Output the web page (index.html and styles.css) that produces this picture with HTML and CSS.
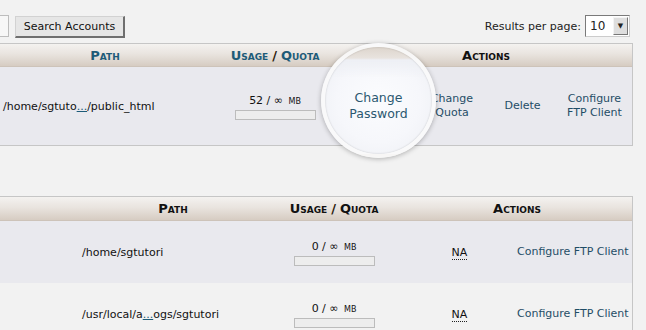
FILE: index.html
```html
<!DOCTYPE html>
<html lang="en">
<head>
  <meta charset="utf-8">
  <title>FTP Accounts</title>
  <link rel="stylesheet" href="styles.css">
</head>
<body>
  <div class="toolbar">
    <div class="search">
      <span class="search-field"></span>
      <button class="btn">Search Accounts</button>
    </div>
    <div class="per-page">
      <span>Results per page:</span>
      <span class="select"><span class="select-value">10</span><span class="select-arrow">&#9660;</span></span>
    </div>
  </div>

  <div class="table table-accounts">
    <div class="row thead">
      <div class="th accent">Path</div>
      <div class="th accent">Usage <span class="slash">/</span> Quota</div>
      <div class="th th-actions">Actions</div>
    </div>
    <div class="row tr">
      <div class="td td-path">/home/sgtuto<a href="#">...</a>/public_html</div>
      <div class="td usage">
        <div class="usage-text">52 / &infin; <span class="unit">mb</span></div>
        <div class="bar"></div>
      </div>
      <div class="td act act-pass">
        <!-- callout over the first action -->
        <a href="#" class="magnifier"><span>Change<br>Password</span></a>
      </div>
      <div class="td act"><a href="#">Change<br>Quota</a></div>
      <div class="td act"><a href="#">Delete</a></div>
      <div class="td act"><a href="#">Configure<br>FTP Client</a></div>
    </div>
  </div>

  <div class="table table-special">
    <div class="row thead">
      <div class="th"></div>
      <div class="th">Path</div>
      <div class="th">Usage <span class="slash">/</span> Quota</div>
      <div class="th th-actions">Actions</div>
    </div>
    <div class="row tr">
      <div class="td"></div>
      <div class="td td-path">/home/sgtutori</div>
      <div class="td usage">
        <div class="usage-text">0 / &infin; <span class="unit">mb</span></div>
        <div class="bar"></div>
      </div>
      <div class="td act"><span class="na">NA</span></div>
      <div class="td act act-left"><a href="#">Configure FTP Client</a></div>
    </div>
    <div class="row tr alt">
      <div class="td"></div>
      <div class="td td-path">/usr/local/a<a href="#">...</a>ogs/sgtutori</div>
      <div class="td usage">
        <div class="usage-text">0 / &infin; <span class="unit">mb</span></div>
        <div class="bar"></div>
      </div>
      <div class="td act"><span class="na">NA</span></div>
      <div class="td act act-left"><a href="#">Configure FTP Client</a></div>
    </div>
  </div>
</body>
</html>
```
FILE: styles.css
```css
:root {
  --bg: #f2f2f2;
  --row: #e9e9ee;
  --border: #c6c6c6;
  --link: #1f4d66;
  --teal: #1d5b78;
  --text: #111;
}
* { box-sizing: border-box; margin: 0; padding: 0; }
body {
  font-family: 'DejaVu Sans', Verdana, sans-serif;
  font-size: 11px;
  background: var(--bg);
  color: var(--text);
  overflow: hidden;
}
a { color: var(--link); text-decoration: none; }

/* top bar */
.toolbar {
  display: flex;
  justify-content: space-between;
  align-items: flex-start;
  padding: 15px 16px 0 0;
  height: 43px;
}
.search {
  display: flex;
  align-items: flex-start;
  gap: 6px;
}
.search-field {
  width: 9px;
  height: 22px;
  background: #f7f7f7;
  border: 1px solid #bdbdbd;
  border-left: none;
}
.btn {
  font-family: 'DejaVu Sans', Verdana, sans-serif;
  font-size: 11px;
  color: #111;
  height: 22px;
  width: 110px;
  margin-top: 1px;
  background: #e6e6e6;
  border: 1px solid #d2d2d2;
  border-right: 2px solid #6f6f6f;
  border-bottom: 2px solid #6f6f6f;
}
.per-page {
  display: flex;
  align-items: center;
  gap: 4px;
  color: #222;
}
.select {
  display: flex;
  align-items: center;
  justify-content: space-between;
  width: 45px;
  height: 22px;
  background: #fff;
  border: 1px solid #7a7a7a;
  border-right-color: #ccc;
  border-bottom-color: #ccc;
  padding: 1px 1px 1px 4px;
  font-size: 12px;
}
.select-arrow {
  width: 15px;
  height: 18px;
  background: #dedede;
  border: 1px solid #f4f4f4;
  border-right-color: #777;
  border-bottom-color: #777;
  font-size: 7px;
  display: flex;
  align-items: center;
  justify-content: center;
}

/* tables */
.table {
  width: 633px;
  border-top: 1px solid var(--border);
  border-right: 1px solid var(--border);
}
.table-accounts {
  border-bottom: 1px solid var(--border);
  margin-bottom: 50px;
}
.row { display: grid; }
.table-accounts .row { grid-template-columns: 210px 130px 76px 72px 69px 75px; }
.table-special .row { grid-template-columns: 80px 186px 136px 115px 115px; }
.table-accounts .th-actions { grid-column: span 4; }
.table-special .th-actions { grid-column: span 2; }

.thead {
  height: 23px;
  background: linear-gradient(#f4f2f0, #e9e4df 45%, #d6ccc2);
  border-bottom: 1px solid #cdc3b9;
}
.table-special .thead { height: 24px; }
.th {
  display: flex;
  align-items: center;
  justify-content: center;
  font-size: 13px;
  font-weight: bold;
  font-variant: small-caps;
  color: var(--text);
}
.th.accent { color: var(--teal); }
.th .slash { color: #2a1a0a; margin: 0 4px; }

.tr { background: var(--row); }
.tr.alt { background: var(--bg); }
.table-accounts .tr { height: 78px; }
.table-special .tr { height: 62px; }

.td {
  display: flex;
  align-items: center;
}
.td-path { padding-left: 3px; }
.table-special .td-path { padding-left: 2px; }
.td-path a { text-decoration: underline; color: var(--teal); }

.usage {
  flex-direction: column;
  justify-content: center;
  gap: 3px;
  padding-top: 1px;
}
.usage-text { line-height: 13px; }
.unit { font-variant: small-caps; margin-left: 2px; }
.bar {
  width: 81px;
  height: 10px;
  background: #ededed;
  border: 1px solid #bcbcbc;
}

.act {
  justify-content: center;
  text-align: center;
  line-height: 14px;
}
.act-left { justify-content: flex-start; white-space: nowrap; }
.na {
  border-bottom: 1px dotted #222;
  line-height: 12px;
  margin-top: 2px;
}

/* magnifying callout */
.act-pass { position: relative; }
.magnifier {
  position: absolute;
  left: -19px;
  top: -24px;
  width: 115px;
  height: 115px;
  border-radius: 50%;
  border: 4px solid rgba(250, 250, 250, 0.9);
  background:
    linear-gradient(#ddd5cd 0, #e8e3de 11px, #eef0f5 13px, rgba(238, 240, 245, 0) 30px),
    radial-gradient(circle, #fbfcfe 0, #f6f7fb 55%, #eceef3 100%);
  box-shadow: 0 1px 5px rgba(0, 0, 0, 0.28), inset 0 0 2px rgba(0, 0, 0, 0.2);
  display: flex;
  align-items: center;
  justify-content: center;
  padding-top: 10px;
  font-size: 12.5px;
  line-height: 16px;
  text-align: center;
  color: #2b5870;
}
```
